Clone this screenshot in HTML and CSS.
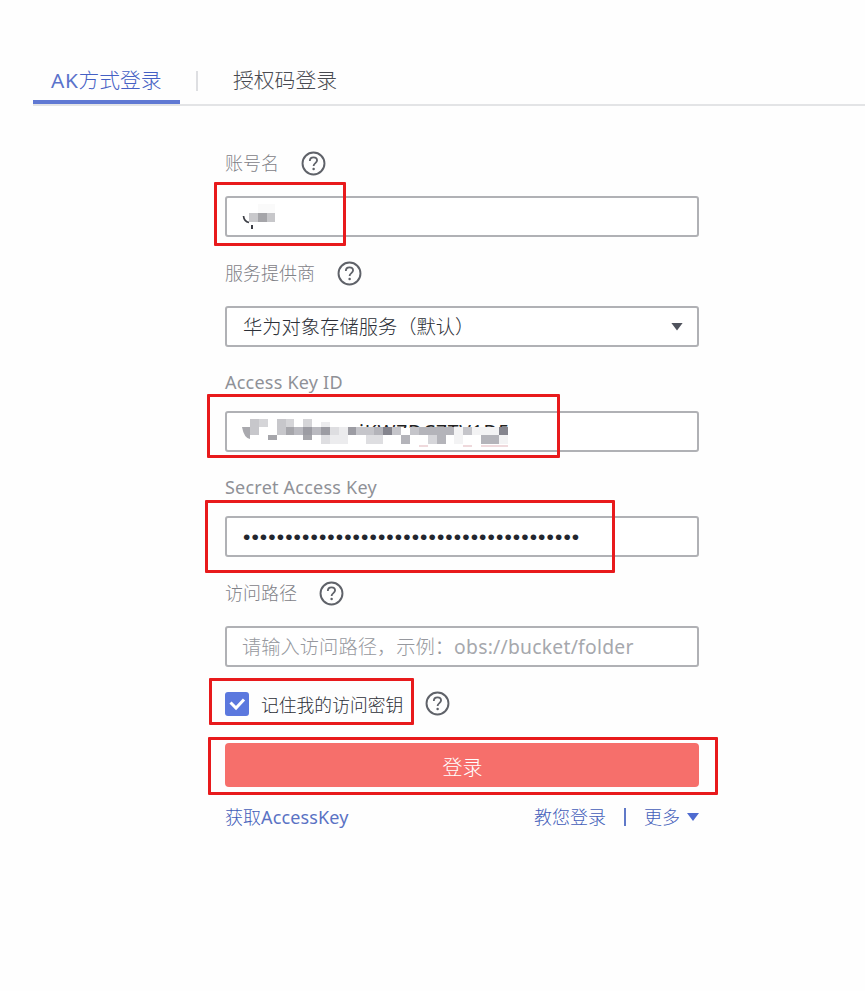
FILE: index.html
```html
<!DOCTYPE html>
<html lang="zh-CN">
<head>
<meta charset="utf-8">
<title>登录</title>
<link rel="stylesheet" href="styles.css">
</head>
<body>
<svg width="0" height="0" class="defs">
  <symbol id="help" viewBox="0 0 26 26">
    <circle cx="13" cy="13" r="11.4" fill="none" stroke="#5f6269" stroke-width="2"/>
    <path d="M9.200 10.300C9.200 8 10.900 6.700 13 6.700s3.700 1.300 3.700 3.300c0 2.500-3.600 2.800-3.600 5.500" fill="none" stroke="#5f6269" stroke-width="1.900"/>
    <circle cx="13.1" cy="18.600" r="1.300" fill="#5f6269"/>
  </symbol>
</svg>
<nav class="tabs">
  <div class="tab active"><span class="latin">AK</span>方式登录</div>
  <div class="divider"></div>
  <div class="tab second">授权码登录</div>
</nav>
<main class="form">
  <section class="field">
    <div class="label"><span>账号名</span><svg class="help"><use href="#help"/></svg></div>
    <div class="input">
      <svg class="mosaic" width="36" height="30" viewBox="241 202 36 30">
        <path d="M243.500 216q.5 5.500 5.500 6.500" fill="none" stroke="#3c3e45" stroke-width="1.700"/>
        <rect x="251" y="225" width="2" height="4" fill="#3c3e45"/>
        <rect x="249" y="213" width="9" height="9" fill="#c9c9cc"/>
        <rect x="258" y="213" width="9" height="9" fill="#a5a5a9"/>
        <rect x="267" y="213" width="8" height="9" fill="#c7c7ca"/>
        <rect x="258" y="204" width="17" height="9" fill="#fafafa"/>
      </svg>
    </div>
    <div class="mark mark-account"></div>
  </section>
  <section class="field">
    <div class="label"><span>服务提供商</span><svg class="help"><use href="#help"/></svg></div>
    <div class="input select"><span>华为对象存储服务（默认）</span><i class="caret"></i></div>
  </section>
  <section class="field compact">
    <div class="label"><span class="latin">Access Key ID</span></div>
    <div class="input">
      <span class="key latin">iKW7DC7TV1D5</span>
      <svg class="mosaic" width="272" height="30" viewBox="240 417 272 30">
        <path fill="#fff" d="M240 428h272v19H240z"/>
        <path fill="#a9a9ae" d="M241 427h8v12q-6-1-8-12z"/>
        <path fill="#c7c7cb" d="M249 419h9v16h-9zM276 419h9v16h-9z"/>
        <path fill="#d5d5d8" d="M258 419h9v8h-9zM285 419h8v8h-8zM302 419h9v8h-9z"/>
        <path fill="#a6a6ab" d="M267 435h9v5h-9zM285 427h8v8h-8zM302 435h9v5h-9z"/>
        <path fill="#babac0" d="M293 427h27v8h-27z"/>
        <path fill="#9c9ca3" d="M302 427h9v8h-9zM320 427h9v8h-9zM347 427h8v8h-8z"/>
        <path fill="#dedee1" d="M320 435h9v9h-9zM329 427h9v8h-9zM365 435h17v9h-17z"/>
        <path fill="#ececee" d="M320 422h9v5h-9zM338 427h9v8h-9zM329 435h18v9h-18z"/>
        <path fill="#c5c5ca" d="M355 427h18v8h-18zM391 427h9v8h-9zM409 427h9v8h-9zM462 427h9v8h-9z"/>
        <path fill="#b4b4ba" d="M373 427h9v8h-9zM418 427h35v8h-35zM400 435h9v9h-9zM436 435h9v9h-9zM480 435h18v9h-18z"/>
        <path fill="#85858e" d="M382 427h9v8h-9zM498 427h9v8h-9z"/>
        <path fill="#d6d6da" d="M427 435h9v9h-9z"/>
        <path fill="#f3f3f4" d="M453 427h9v17h-9zM471 427h27v8h-27zM498 435h9v9h-9z"/>
        <path fill="#efd9dc" d="M418 445h9v2h-9zM462 445h9v2h-9zM480 445h27v2h-27z"/>
      </svg>
    </div>
    <div class="mark mark-key"></div>
  </section>
  <section class="field compact">
    <div class="label"><span class="latin">Secret Access Key</span></div>
    <div class="input"><span class="dots">••••••••••••••••••••••••••••••••••••••••</span></div>
    <div class="mark mark-secret"></div>
  </section>
  <section class="field">
    <div class="label"><span>访问路径</span><svg class="help"><use href="#help"/></svg></div>
    <div class="input placeholder"><span>请输入访问路径，示例：</span><span class="latin">obs://bucket/folder</span></div>
  </section>
  <section class="remember">
    <svg class="check" viewBox="0 0 24 24"><rect width="24" height="24" rx="3" fill="#5b78de"/><path d="M5.500 10.500l5.500 5.500 8-8.500" fill="none" stroke="#fff" stroke-width="3"/></svg>
    <span class="remember-text">记住我的访问密钥</span>
    <svg class="help"><use href="#help"/></svg>
    <div class="mark mark-remember"></div>
  </section>
  <section class="submit">
    <button class="login">登录</button>
    <div class="mark mark-login"></div>
  </section>
  <footer class="links">
    <a>获取<span class="latin">AccessKey</span></a>
    <div class="right"><a>教您登录</a><i class="bar"></i><a>更多</a><i class="caret blue"></i></div>
  </footer>
</main>
</body>
</html>
```
FILE: styles.css
```css
* { box-sizing: border-box; }
body {
  margin: 0;
  height: 991px;
  overflow: hidden;
  background: #fefefe;
  font-family: "Noto Sans", "Noto Sans CJK SC", sans-serif;
  font-weight: 300;
  font-size: 18px;
  line-height: 24px;
  color: #2c2f37;
  white-space: nowrap;
}
.defs { display: block; }
.latin { font-weight: 400; }
.tabs {
  display: flex;
  align-items: center;
  margin: 58px 0 0 33px;
  height: 48px;
  border-bottom: 2px solid #e3e4e6;
  font-size: 20.8px;
}
.tab { height: 46px; line-height: 45px; color: #484a51; }
.tab.active {
  width: 147px;
  padding-left: 18px;
  border-bottom: 4px solid #6079d3;
  color: #4560c4;
}
.tab .latin { color: #5a72cb; letter-spacing: 0.6px; }
.divider { width: 2px; height: 20px; margin: 0 35px 0 16px; background: #dedfe2; }
.form { width: 474px; margin: 45px 0 0 225px; }
.field { position: relative; margin-bottom: 24px; }
.field.compact { margin-top: -1px; }
.label {
  display: flex;
  align-items: center;
  gap: 22px;
  height: 24px;
  margin-bottom: 21px;
  color: #7f8187;
}
.label .latin { color: #8f9197; letter-spacing: 0.22px; }
.compact .label { margin-bottom: 17px; }
.help { width: 25px; height: 25px; flex: none; }
.input {
  position: relative;
  display: flex;
  align-items: center;
  height: 41px;
  padding: 0 14px 0 16px;
  border: 2px solid #b0b1b5;
  border-radius: 3px;
  background: #fff;
  font-size: 19.3px;
}
.select { justify-content: space-between; }
.caret {
  width: 12px;
  height: 8px;
  background: #50535d;
  clip-path: polygon(0 0, 100% 0, 50% 100%);
}
.mosaic { position: absolute; left: 14px; top: 4px; }
.key { padding-left: 116px; color: #222; letter-spacing: 0.8px; }
.dots { font-family: "Liberation Sans", sans-serif; font-size: 21px; letter-spacing: 1.08px; color: #23262e; }
.placeholder { color: #96989e; padding-left: 15px; }
.placeholder .latin { color: #a6a8ad; letter-spacing: 0.26px; }
.remember { position: relative; display: flex; align-items: center; height: 26px; margin-bottom: 26px; }
.check { width: 24px; height: 24px; }
.remember-text { margin: 1px 22px 0 12px; font-size: 17.8px; }
.remember .help { margin-top: -2px; }
.submit { position: relative; }
.login {
  display: block;
  width: 100%;
  height: 44px;
  padding: 5px 0 0 1px;
  border: 0;
  border-radius: 4px;
  background: #f66f6b;
  color: #fff;
  font: inherit;
  font-size: 20px;
}
.links { display: flex; justify-content: space-between; margin-top: 18px; color: #435db9; }
.links .latin { color: #5a72c4; letter-spacing: 0.15px; }
.right { display: flex; align-items: center; }
.bar { width: 2px; height: 18px; margin: 0 18px; background: #6079c8; }
.blue { margin-left: 7px; background: #4f6bd0; }
.mark { position: absolute; border: 3px solid #e81a1c; border-radius: 1px; }
.mark-account { left: -11px; top: 31px; width: 132px; height: 64px; }
.mark-key { left: -18px; top: 24px; width: 353px; height: 64px; }
.mark-secret { left: -20px; top: 25px; width: 410px; height: 73px; }
.mark-remember { left: -16px; top: -13px; width: 205px; height: 47px; }
.mark-login { left: -17px; top: -6px; width: 510px; height: 58px; }
```
